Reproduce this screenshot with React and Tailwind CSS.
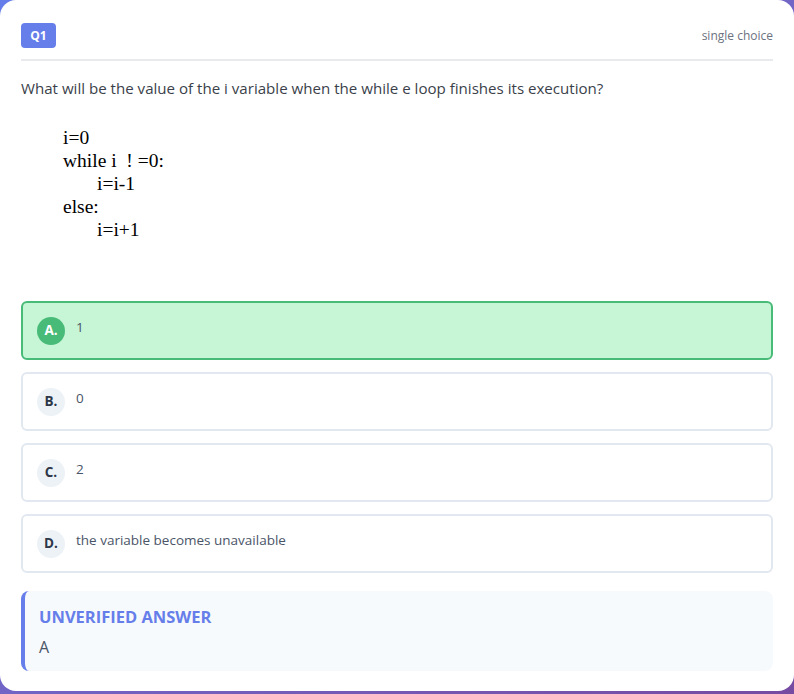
import React from "react";

const options = [
  { l: "A.", t: "1", correct: true },
  { l: "B.", t: "0" },
  { l: "C.", t: "2" },
  { l: "D.", t: "the variable becomes unavailable" },
];

export default function App() {
  return (
    <div className="w-[794px] h-[694px] bg-gradient-to-br from-[#667eea] to-[#764ba2] overflow-hidden">
      <div
        className="h-[691px] bg-white rounded-[16px] px-[21px] pt-[23px]"
        style={{ fontFamily: '"Open Sans", "Noto Sans", sans-serif' }}
      >
        <div className="flex justify-between items-center pb-[11px] border-b-2 border-[#e8eaee]">
          <div className="h-[25px] w-[35px] rounded-[4px] bg-[#667eea] text-white text-[12px] font-bold flex items-center justify-center">
            Q1
          </div>
          <div className="text-[12px] text-[#6b7280]">single choice</div>
        </div>
        <p className="mt-[15px] text-[15.1px] leading-[24px] text-[#3a3f4a]">
          What will be the value of the i variable when the while e loop finishes its execution?
        </p>
        <div
          className="mt-[26px] ml-[42px] text-[19.5px] leading-[23px] text-black"
          style={{ fontFamily: '"Liberation Serif", serif' }}
        >
          <div>i=0</div>
          <div className="whitespace-pre">while i  ! =0:</div>
          <div className="pl-[34px]">i=i-1</div>
          <div>else:</div>
          <div className="pl-[34px]">i=i+1</div>
        </div>
        <div className="mt-[60px] flex flex-col gap-[12px]">
          {options.map((o) => (
            <div
              key={o.l}
              className={
                o.correct
                  ? "h-[59px] rounded-[6px] border-2 border-[#48bb78] bg-[#c6f6d5] flex items-center px-[14px] gap-[11px]"
                  : "h-[59px] rounded-[6px] border-2 border-[#e2e8f0] bg-white flex items-center px-[14px] gap-[11px]"
              }
            >
              <div
                className={
                  o.correct
                    ? "w-[28px] h-[28px] rounded-full bg-[#48bb78] text-white text-[13.5px] font-bold flex items-center justify-center"
                    : "w-[28px] h-[28px] rounded-full bg-[#edf2f7] text-[#2d3748] text-[13.5px] font-bold flex items-center justify-center"
                }
              >
                {o.l}
              </div>
              <div className="text-[13.5px] text-[#4a5568] -mt-[6px]">{o.t}</div>
            </div>
          ))}
        </div>
        <div className="mt-[18px] h-[80px] rounded-[8px] bg-[#f7fafc] border-l-4 border-[#667eea] pl-[14px] pt-[14px]">
          <div className="text-[16.5px] font-bold text-[#667eea] leading-[24px]">UNVERIFIED ANSWER</div>
          <div className="mt-[7px] text-[16px] text-[#4a5568] leading-[22px]">A</div>
        </div>
      </div>
    </div>
  );
}
